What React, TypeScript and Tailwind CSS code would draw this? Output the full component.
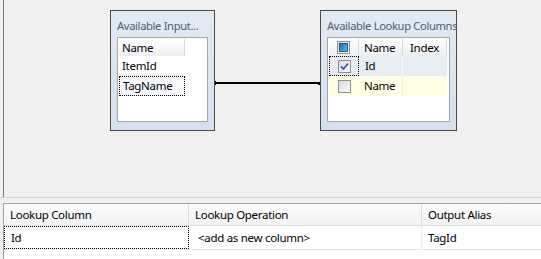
import React from 'react';

const font = { fontFamily: '"Noto Sans", "Open Sans", sans-serif' };

const CheckBox = ({ state }: { state: 'on' | 'off' | 'mixed' }) => (
  <div className="w-[13px] h-[13px] border border-[#8e8f8f] bg-gradient-to-br from-[#dcdcdc] to-[#fbfbfb] flex items-center justify-center">
    {state === 'mixed' && <div className="w-[9px] h-[9px] bg-gradient-to-br from-[#1f6fb5] to-[#58b6e8] border border-[#1c5d98]" />}
    {state === 'on' && (
      <svg width="9" height="9" viewBox="0 0 9 9">
        <path d="M1 4.5 L3.5 7 L8 1.5" stroke="#3d5ab8" strokeWidth="1.8" fill="none" />
      </svg>
    )}
  </div>
);

const Node = ({ title, children, className }: { title: string; children: React.ReactNode; className: string }) => (
  <div className={'absolute top-[10px] h-[121px] border border-[#4a4a4a] bg-gradient-to-b from-[#e2eaf4] to-[#d4e0ef] flex flex-col px-[6px] pb-[8px] ' + className}>
    <div className="h-[26px] pt-[8px] text-[11.2px] leading-[14px] tracking-[-0.35px] text-[#4d5e74] whitespace-nowrap">{title}</div>
    <div className="flex-1 bg-white border border-[#a6a6a6] p-px">{children}</div>
  </div>
);

const HeaderCell = ({ children, className }: { children?: React.ReactNode; className: string }) => (
  <div className={'h-[17px] flex items-center bg-gradient-to-b from-white to-[#eceef1] border-r border-[#dadada] text-[11.5px] text-black ' + className}>
    {children}
  </div>
);

export default function App() {
  return (
    <div className="w-[541px] h-[259px] bg-[#f0f0f0] flex flex-col overflow-hidden tracking-[-0.3px]" style={font}>
      <div className="relative h-[197px] shrink-0 ml-[3px] border-l border-[#7a7a7a]">
        <Node title="Available Input..." className="left-[106px] w-[105px]">
          <div className="w-[66px]">
            <HeaderCell className="pl-[3px]">Name</HeaderCell>
            <div className="h-[20px] flex items-center pl-[3px] border-b border-[#f0f0f0] text-[11.5px]">ItemId</div>
            <div className="h-[20px] flex items-center pl-[3px] border border-dotted border-black text-[11.5px] bg-[#f6f8fb]">TagName</div>
          </div>
        </Node>

        {/* connector */}
        <div className="absolute left-[211px] top-[80px] w-[106px] h-[6px] flex items-center">
          <div className="w-px h-[4px] bg-black" />
          <div className="flex-1 h-[2px] bg-black" />
          <div className="w-[3px] h-[3px] bg-black" />
        </div>

        <Node title="Available Lookup Columns" className="left-[316px] w-[137px]">
          <div className="w-[118px]">
            <div className="flex">
              <HeaderCell className="w-[30px] justify-center"><CheckBox state="mixed" /></HeaderCell>
              <HeaderCell className="w-[44px] pl-[5px]">Name</HeaderCell>
              <HeaderCell className="w-[44px] pl-[7px]">Index</HeaderCell>
            </div>
            <div className="flex h-[20px] bg-[#e8edf3] text-[11.5px]">
              <div className="w-[30px] flex items-center justify-center border border-dotted border-black"><CheckBox state="on" /></div>
              <div className="w-[44px] flex items-center pl-[6px] border-r border-[#fafafa]">Id</div>
              <div className="w-[44px]" />
            </div>
            <div className="flex h-[20px] bg-[#fffde3] text-[11.5px]">
              <div className="w-[30px] flex items-center justify-center"><CheckBox state="off" /></div>
              <div className="w-[44px] flex items-center pl-[5px] border-r border-[#f3f0d8]">Name</div>
              <div className="w-[44px]" />
            </div>
          </div>
        </Node>
      </div>

      <div className="h-px bg-[#d6d6d6] shrink-0" />

      <div className="mt-[5px] ml-[3px] flex-1 bg-white border-t border-l border-[#a0a0a0] text-[11.5px] text-black">
        <div className="flex h-[22px] bg-gradient-to-b from-[#fbfbfb] to-[#f1f2f4] border-b border-[#dcdcdc]">
          <div className="w-[185px] flex items-center pl-[6px] border-r border-[#dcdcdc]">Lookup Column</div>
          <div className="w-[233px] flex items-center pl-[6px] border-r border-[#dcdcdc]">Lookup Operation</div>
          <div className="flex-1 flex items-center pl-[6px]">Output Alias</div>
        </div>
        <div className="flex h-[24px] border-b border-[#e4e4e4]">
          <div className="w-[185px] flex items-center pl-[6px] border border-dotted border-black">Id</div>
          <div className="w-[233px] flex items-center pl-[9px] border-r border-[#ececec]">&lt;add as new column&gt;</div>
          <div className="flex-1 flex items-center pl-[6px]">TagId</div>
        </div>
      </div>
    </div>
  );
}
